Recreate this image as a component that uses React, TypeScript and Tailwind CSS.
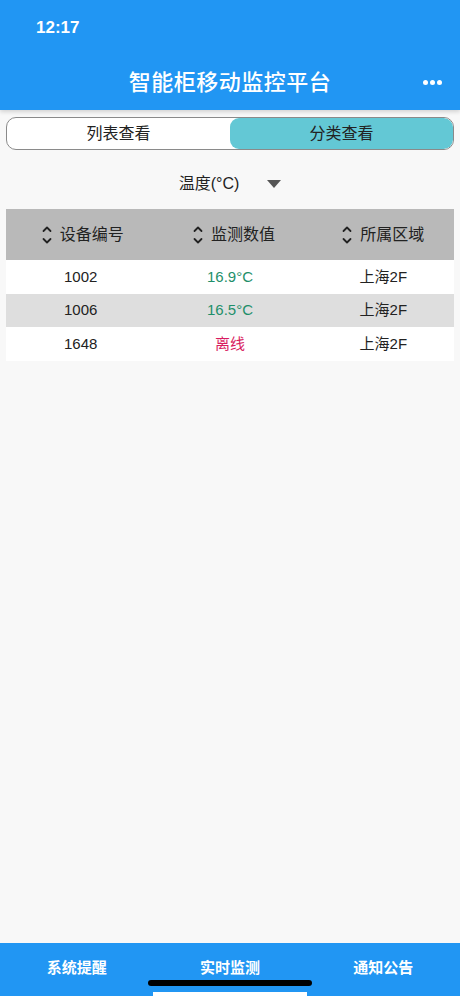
import React from 'react';

const font = { fontFamily: '"Liberation Sans", "Noto Sans CJK SC", sans-serif' };

const SortIcon: React.FC = () => (
  <svg width="10" height="22" viewBox="0 0 10 22" className="mr-2">
    <path d="M1.5 7 L5 3.5 L8.5 7" fill="none" stroke="#222" strokeWidth="1.8" strokeLinecap="round" strokeLinejoin="round" />
    <path d="M1.5 15 L5 18.5 L8.5 15" fill="none" stroke="#222" strokeWidth="1.8" strokeLinecap="round" strokeLinejoin="round" />
  </svg>
);

const rows = [
  { id: '1002', value: '16.9°C', online: true, area: '上海2F' },
  { id: '1006', value: '16.5°C', online: true, area: '上海2F' },
  { id: '1648', value: '离线', online: false, area: '上海2F' },
];

export default function App() {
  return (
    <div className="relative w-[460px] h-[996px] bg-[#f8f8f8] flex flex-col overflow-hidden" style={font}>
      {/* header */}
      <div className="bg-[#2196f3] h-[110px] shrink-0 flex flex-col shadow-[0_2px_4px_rgba(0,0,0,0.15)]">
        <div className="h-[56px] pl-[36px] pt-[17px] text-white text-[17px] font-semibold leading-[22px]">12:17</div>
        <div className="flex-1 flex items-center justify-center relative pb-[2px]">
          <span className="text-white text-[22px] font-medium tracking-[0.5px]">智能柜移动监控平台</span>
          <div className="absolute right-[18px] flex gap-[2px]">
            <span className="w-[5px] h-[5px] rounded-full bg-white" />
            <span className="w-[5px] h-[5px] rounded-full bg-white" />
            <span className="w-[5px] h-[5px] rounded-full bg-white" />
          </div>
        </div>
      </div>

      {/* segmented control */}
      <div className="px-[6px] pt-[7px]">
        <div className="flex h-[33px] rounded-[10px] border border-[#8a8a8a] bg-white overflow-hidden">
          <div className="flex-1 flex items-center justify-center text-[16px] text-[#222]">列表查看</div>
          <div className="flex-1 flex items-center justify-center text-[16px] text-[#222] bg-[#63c8d5] rounded-[9px]">分类查看</div>
        </div>
      </div>

      {/* dropdown */}
      <div className="h-[59px] flex items-center justify-center pt-[8px]">
        <span className="text-[16px] text-[#222]">温度(°C)</span>
        <svg width="14" height="8" viewBox="0 0 14 8" className="ml-[28px]">
          <path d="M0 0 H14 L7 8 Z" fill="#555" />
        </svg>
      </div>

      {/* table */}
      <div className="mx-[6px]">
        <div className="grid grid-cols-3 h-[51px] bg-[#b9b9b9] text-[16px] text-[#222]">
          <div className="flex items-center justify-center pl-[4px]"><SortIcon />设备编号</div>
          <div className="flex items-center justify-center pl-[8px]"><SortIcon />监测数值</div>
          <div className="flex items-center justify-center pl-[8px]"><SortIcon />所属区域</div>
        </div>
        {rows.map((r, i) => (
          <div key={r.id} className={`grid grid-cols-3 h-[33.5px] text-[15px] ${i % 2 === 1 ? 'bg-[#dedede]' : 'bg-white'}`}>
            <div className="flex items-center justify-center text-[#222]">{r.id}</div>
            <div className={`flex items-center justify-center ${r.online ? 'text-[#1f8f6a]' : 'text-[#d81b60]'}`}>{r.value}</div>
            <div className="flex items-center justify-center pl-[8px] text-[#222]">{r.area}</div>
          </div>
        ))}
      </div>

      <div className="flex-1" />

      {/* bottom tabs */}
      <div className="h-[53px] bg-[#2196f3] grid grid-cols-3 items-start pt-[14px]">
        <div className="text-center text-white text-[15px] font-semibold">系统提醒</div>
        <div className="text-center text-white text-[15px] font-semibold">实时监测</div>
        <div className="text-center text-white text-[15px] font-semibold">通知公告</div>
      </div>

      {/* home indicator */}
      <div className="absolute left-[148px] top-[980px] w-[164px] h-[6px] rounded-full bg-black" />
      <div className="absolute left-[153px] top-[992px] w-[154px] h-[4px] bg-white" />
    </div>
  );
}
